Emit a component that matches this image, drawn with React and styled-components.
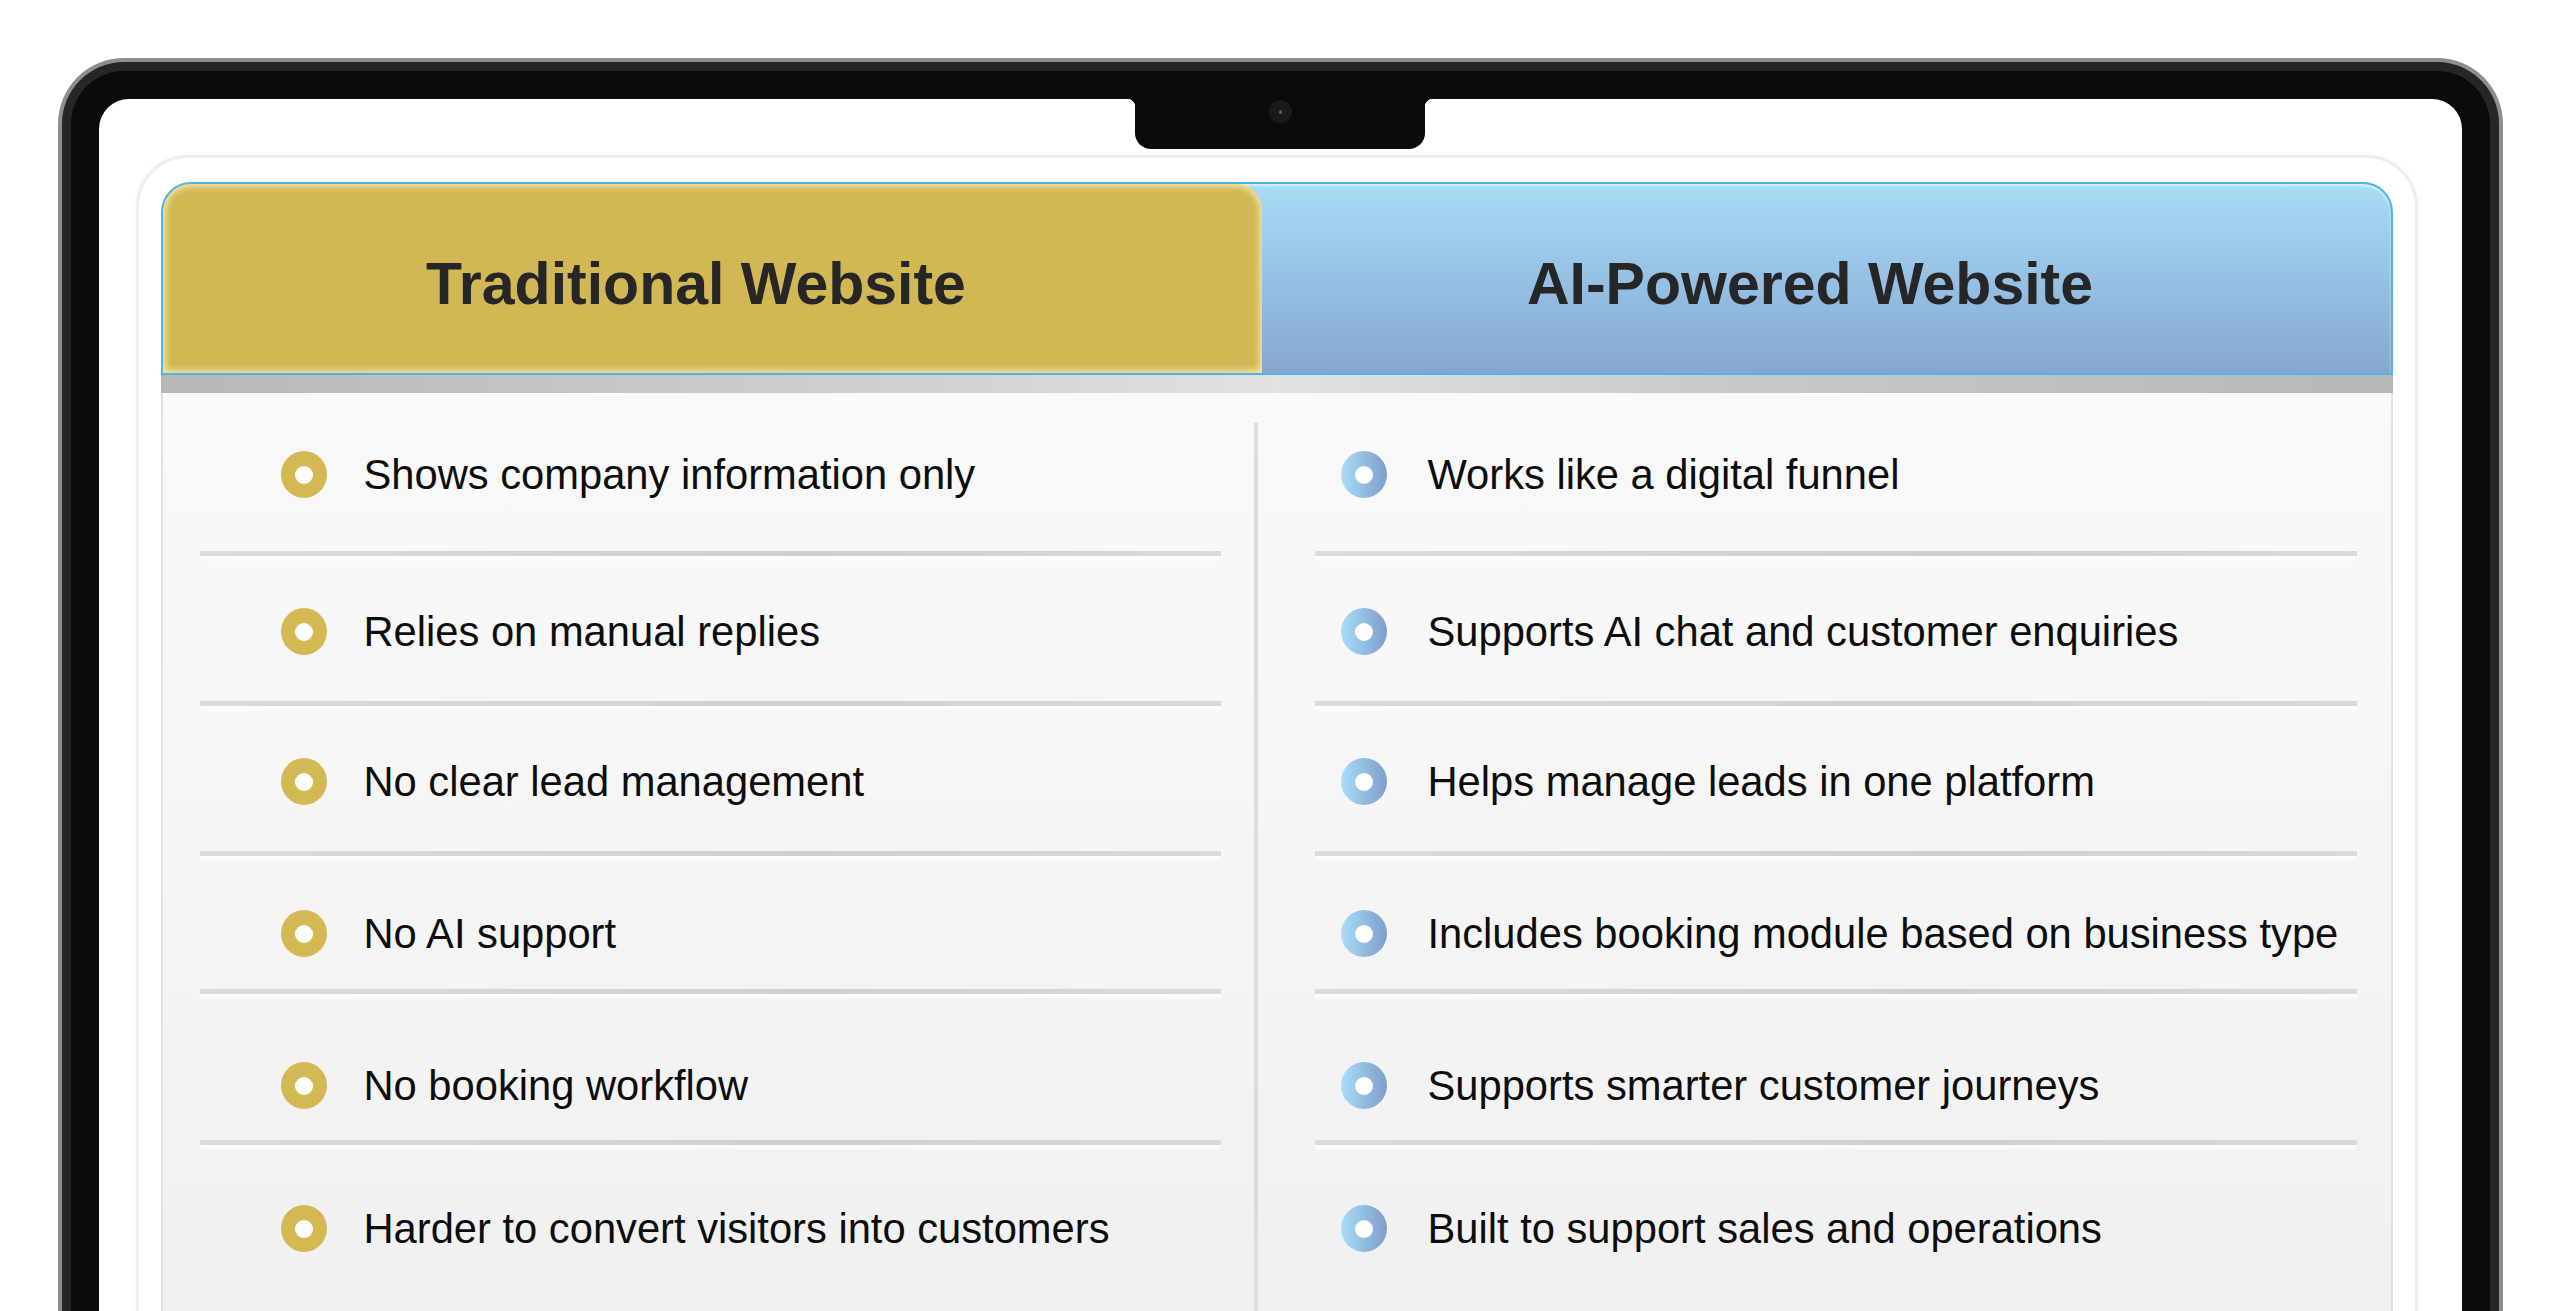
import React from "react";
import styled, { createGlobalStyle } from "styled-components";

const GlobalStyle = createGlobalStyle`
  html, body {
    margin: 0;
    padding: 0;
    height: 100%;
    overflow: hidden;
    background: #ffffff;
    font-family: "Liberation Sans", Arial, sans-serif;
  }
`;

const Page = styled.div`
  padding-top: 58px;
  height: 100vh;
  box-sizing: border-box;
  overflow: hidden;
`;

const Device = styled.div`
  width: 2445px;
  min-height: 1400px;
  margin: 0 auto;
  box-sizing: border-box;
  border: 4px solid #8e8e8e;
  border-bottom: none;
  border-radius: 66px 66px 0 0;
  background: #0b0b0b;
  box-shadow: inset 0 0 0 9px #262626;
  padding: 37px 37px 0;
`;

const Screen = styled.div`
  position: relative;
  min-height: 1400px;
  background: #ffffff;
  border-radius: 30px 30px 0 0;
  padding: 56px 0 0 37px;
  display: flex;
  justify-content: flex-start;
  align-items: flex-start;
`;

const Notch = styled.div`
  position: absolute;
  top: 0;
  left: 50%;
  transform: translateX(-50%);
  width: 290px;
  height: 50px;
  background: #0b0b0b;
  border-radius: 0 0 16px 16px;
  display: flex;
  justify-content: center;

  &::before,
  &::after {
    content: "";
    position: absolute;
    top: 0;
    width: 8px;
    height: 8px;
  }
  &::before {
    left: -8px;
    background: radial-gradient(circle at 0 8px, transparent 8px, #0b0b0b 8.5px);
  }
  &::after {
    right: -8px;
    background: radial-gradient(circle at 8px 8px, transparent 8px, #0b0b0b 8.5px);
  }
`;

const Camera = styled.div`
  margin-top: 1px;
  width: 23px;
  height: 23px;
  border-radius: 50%;
  background: #1a1a1c;
  display: flex;
  align-items: center;
  justify-content: center;

  &::after {
    content: "";
    width: 3px;
    height: 4px;
    border-radius: 2px;
    background: #5a5a5a;
  }
`;

const Card = styled.div`
  width: 2282px;
  box-sizing: border-box;
  background: #ffffff;
  border: 3px solid #eeeeee;
  border-radius: 52px 52px 0 0;
  padding: 24px 22px 0;
  box-shadow: 0 0 6px rgba(0, 0, 0, 0.04);
`;

const Table = styled.div`
  width: 2232px;
`;

const Header = styled.div`
  display: flex;
  height: 193px;
  box-sizing: border-box;
  border: 2px solid #4fb4e1;
  border-radius: 30px 30px 0 0;
  overflow: hidden;
  background: linear-gradient(180deg, #a7dcf6 0%, #98c4e6 45%, #86a6d1 100%);
  box-shadow: inset 0 2px 3px rgba(255, 255, 255, 0.6);
`;

const HeadCell = styled.div`
  width: ${(p) => p.$width};
  flex: ${(p) => (p.$grow ? 1 : "none")};
  display: flex;
  align-items: center;
  justify-content: center;
  padding: 10px 32px 0 0;
  box-sizing: border-box;
  font-family: "Liberation Sans", Arial, sans-serif;
  font-weight: 700;
  font-size: 59px;
  color: #262626;
  border-radius: ${(p) => (p.$gold ? "28px 26px 0 0" : "0")};
  background: ${(p) => (p.$gold ? "#d2b854" : "transparent")};
  box-shadow: ${(p) =>
    p.$gold ? "inset 0 0 7px 2px rgba(255, 244, 196, 0.85)" : "none"};
`;

const GrayBar = styled.div`
  height: 18px;
  background: linear-gradient(90deg, #b7b7b7 0%, #d2d2d2 35%, #e2e2e2 50%, #c9c9c9 70%, #b7b7b7 100%);
`;

const Body = styled.div`
  display: flex;
  min-height: 1000px;
  background: linear-gradient(180deg, #f9f9f9 0%, #f6f6f6 40%, #efefef 100%);
  border-left: 2px solid #e2e2e2;
  border-right: 2px solid #e2e2e2;
`;

const Column = styled.div`
  width: ${(p) => p.$width};
  flex: ${(p) => (p.$grow ? 1 : "none")};
  box-sizing: border-box;
  display: flex;
  flex-direction: column;
`;

const CenterLine = styled.div`
  width: 4px;
  margin-top: 30px;
  background: #dcdcdc;
`;

const Row = styled.div`
  display: flex;
  flex-direction: column;
`;

const RowContent = styled.div`
  height: ${(p) => p.$height}px;
  display: flex;
  align-items: flex-start;
  padding-left: ${(p) => p.$indent}px;
  padding-top: ${(p) => p.$top}px;
  box-sizing: border-box;
`;

const Divider = styled.div`
  height: 5px;
  margin-left: ${(p) => p.$left}px;
  margin-right: ${(p) => p.$right}px;
  background: linear-gradient(90deg, #dcdcdc 0%, #d3d3d3 40%, #cecece 60%, #dadada 100%);
  box-shadow: 0 4px 3px rgba(255, 255, 255, 0.95);
`;

const Bullet = styled.div`
  width: 46px;
  height: 47px;
  flex: none;
  border-radius: 50%;
  background: ${(p) =>
    p.$gold ? "#d3b853" : "linear-gradient(90deg, #a9def7 0%, #92bde3 50%, #7f9dcb 100%)"};
  display: flex;
  align-items: center;
  justify-content: center;

  &::after {
    content: "";
    width: 18px;
    height: 18px;
    border-radius: 50%;
    background: #ffffff;
  }
`;

const ItemText = styled.span`
  margin-left: ${(p) => p.$gap}px;
  font-family: "Liberation Sans", Arial, sans-serif;
  font-size: 41.7px;
  line-height: 47px;
  color: #0d0d0d;
  white-space: nowrap;
`;

// row geometry shared by both columns: content height and bullet offset
const rows = [
  { height: 158, top: 58 },
  { height: 145, top: 52 },
  { height: 145, top: 52 },
  { height: 133, top: 54 },
  { height: 146, top: 68 },
  { height: 170, top: 60 },
];

const traditional = [
  "Shows company information only",
  "Relies on manual replies",
  "No clear lead management",
  "No AI support",
  "No booking workflow",
  "Harder to convert visitors into customers",
];

const aiPowered = [
  "Works like a digital funnel",
  "Supports AI chat and customer enquiries",
  "Helps manage leads in one platform",
  "Includes booking module based on business type",
  "Supports smarter customer journeys",
  "Built to support sales and operations",
];

function ItemList({ items, gold, indent, gap, divLeft, divRight }) {
  return items.map((text, i) => (
    <Row key={text}>
      <RowContent $indent={indent} $height={rows[i].height} $top={rows[i].top}>
        <Bullet $gold={gold} />
        <ItemText $gap={gap}>{text}</ItemText>
      </RowContent>
      {i < items.length - 1 && <Divider $left={divLeft} $right={divRight} />}
    </Row>
  ));
}

export default function App() {
  return (
    <>
      <GlobalStyle />
      <Page>
        <Device>
          <Screen>
            <Notch>
              <Camera />
            </Notch>
            <Card>
              <Table>
                <Header>
                  <HeadCell $gold $width="1099px">
                    Traditional Website
                  </HeadCell>
                  <HeadCell $grow>AI-Powered Website</HeadCell>
                </Header>
                <GrayBar />
                <Body>
                  <Column $width="1091px">
                    <ItemList
                      items={traditional}
                      gold
                      indent={118}
                      gap={37}
                      divLeft={37}
                      divRight={33}
                    />
                  </Column>
                  <CenterLine />
                  <Column $grow>
                    <ItemList
                      items={aiPowered}
                      indent={83}
                      gap={41}
                      divLeft={57}
                      divRight={34}
                    />
                  </Column>
                </Body>
              </Table>
            </Card>
          </Screen>
        </Device>
      </Page>
    </>
  );
}
